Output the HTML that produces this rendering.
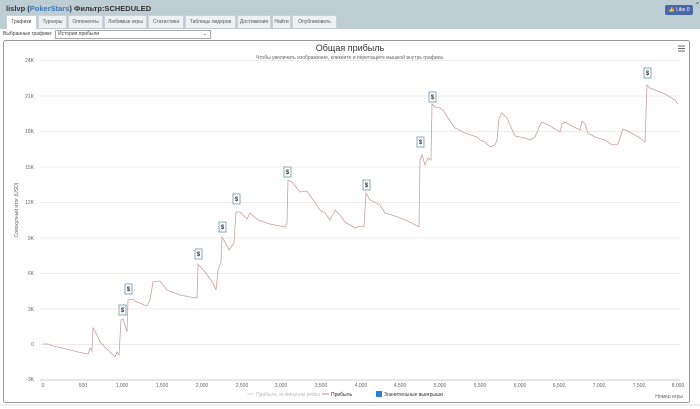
<!DOCTYPE html>
<html><head><meta charset="utf-8"><style>
body{margin:0;width:700px;height:409px;overflow:hidden;background:#fff;font-family:"Liberation Sans","DejaVu Sans",sans-serif;position:relative}
.hdr{position:absolute;left:0;top:0;width:700px;height:29px;background:#bdcdd4}
.title{position:absolute;left:6px;top:4px;font-size:7.5px;font-weight:bold;color:#333}
.title span{color:#3a78b8}
.tab{position:absolute;top:15px;height:13px;background:#eef1f2;border:1px solid #c9d2d6;border-bottom:none;font-size:5px;color:#555;line-height:13px;text-align:center;box-sizing:border-box}
.tab.on{background:#fff;height:14px;color:#444}
.fb{position:absolute;left:665px;top:5px;width:28px;height:10px;background:#4a67a8;border-radius:2px;color:#fff;font-size:5px;line-height:10px;text-align:center}
</style></head><body>
<div class="hdr"></div>
<div class="title">lislvp (<span>PokerStars</span>) Фильтр:SCHEDULED</div>
<div class="fb">👍 Like 0</div>
<div style="position:absolute;left:696px;top:1px;font-size:5px;color:#333">×</div>
<div class="tab on" style="left:6px;width:31px">Графики</div>
<div class="tab" style="left:38px;width:29px">Турниры</div>
<div class="tab" style="left:68px;width:35px">Оппоненты</div>
<div class="tab" style="left:104px;width:43px">Любимые игры</div>
<div class="tab" style="left:148px;width:36px">Статистика</div>
<div class="tab" style="left:185px;width:51px">Таблицы лидеров</div>
<div class="tab" style="left:237px;width:34px">Достижения</div>
<div class="tab" style="left:272px;width:19px">Найти</div>
<div class="tab" style="left:292px;width:45px">Опубликовать</div>
<div style="position:absolute;left:3px;top:31px;font-size:5px;color:#444">Выбранные графики:</div>
<div style="position:absolute;left:55px;top:30px;width:152px;height:7px;border:1px solid #aaa;font-size:5px;line-height:7px;color:#444;padding-left:2px;box-sizing:content-box">История прибыли<span style="position:absolute;right:3px">⌄</span></div>
<svg width="700" height="409" style="position:absolute;left:0;top:0" font-family="Liberation Sans,DejaVu Sans,sans-serif">
<rect x="3.5" y="40.5" width="686" height="362" fill="none" stroke="#999" rx="2"/>
<text x="350" y="51" font-size="9" text-anchor="middle" fill="#333">Общая прибыль</text>
<text x="350" y="59" font-size="5" text-anchor="middle" fill="#666">Чтобы увеличить изображение, кликните и перетащите мышкой внутрь графика.</text>
<g stroke="#666" stroke-width="1"><line x1="678" y1="46" x2="685" y2="46"/><line x1="678" y1="48.5" x2="685" y2="48.5"/><line x1="678" y1="51" x2="685" y2="51"/></g>
<g stroke="#ececec" stroke-width="1">
<line x1="40" x2="680" y1="60.5" y2="60.5"/><line x1="40" x2="680" y1="96" y2="96"/><line x1="40" x2="680" y1="131.5" y2="131.5"/><line x1="40" x2="680" y1="167" y2="167"/><line x1="40" x2="680" y1="202.5" y2="202.5"/><line x1="40" x2="680" y1="238" y2="238"/><line x1="40" x2="680" y1="273.5" y2="273.5"/><line x1="40" x2="680" y1="309" y2="309"/><line x1="40" x2="680" y1="344.5" y2="344.5"/><line x1="40" x2="680" y1="380" y2="380" stroke="#ccc"/>
</g>
<g font-size="5" fill="#666" text-anchor="end">
<text x="34" y="62">24K</text><text x="34" y="98">21K</text><text x="34" y="133">18K</text><text x="34" y="169">15K</text><text x="34" y="204">12K</text><text x="34" y="240">9K</text><text x="34" y="275">6K</text><text x="34" y="311">3K</text><text x="34" y="346">0</text><text x="34" y="381">-3K</text>
</g>
<text transform="translate(18,210) rotate(-90)" font-size="5" fill="#666" text-anchor="middle">Совокупный итог (USD)</text>
<g font-size="5" fill="#666" text-anchor="middle">
<text x="43" y="387">0</text><text x="83" y="387">500</text><text x="122" y="387">1,000</text><text x="162" y="387">1,500</text><text x="202" y="387">2,000</text><text x="242" y="387">2,500</text><text x="281" y="387">3,000</text><text x="321" y="387">3,500</text><text x="361" y="387">4,000</text><text x="400" y="387">4,500</text><text x="440" y="387">5,000</text><text x="480" y="387">5,500</text><text x="520" y="387">6,000</text><text x="559" y="387">6,500</text><text x="599" y="387">7,000</text><text x="639" y="387">7,500</text><text x="678" y="387">8,000</text>
</g>
<text x="683" y="398" font-size="5" fill="#666" text-anchor="end">Номер игры</text>
<line x1="247" x2="254" y1="394" y2="394" stroke="#ddd"/><text x="256" y="396" font-size="5" fill="#bbb">Прибыль за минусом рейка</text>
<line x1="322" x2="329" y1="394" y2="394" stroke="#b88"/><text x="331" y="396" font-size="5" fill="#333">Прибыль</text>
<rect x="376" y="391" width="6" height="6" fill="#2f7ed8"/><text x="384" y="396" font-size="5" fill="#333">Значительные выигрыши</text>
<polyline fill="none" stroke="#c9a0a0" stroke-width="0.8" points="43,344 48,344 53,346 70,350 78,352 88,354 90,348 92,351 93,328 97,335 100,342 110,352 115,357 117,352 119,355 121,320 123,319 127,332 128,300 133,299 135,301 147,306 150,300 153,282 160,281 167,290 180,295 190,297 197,298 198,264 205,272 213,283 216,290 218,270 221,262 222,237 225,242 229,250 234,243 236,212 240,212 247,219 250,213 258,220 270,224 285,227 287,223 288,180 292,182 300,192 307,191 320,210 325,213 330,220 335,210 340,215 345,222 350,225 355,228 360,226 364,227 366,193 370,200 380,205 385,213 395,216 410,222 419,227 420,160 422,155 425,165 428,158 431,160 432,104 435,107 440,108 443,110 448,118 455,128 465,133 477,137 480,140 485,142 490,147 495,145 497,140 499,118 502,113 507,118 510,125 515,136 520,137 525,138 530,140 535,137 540,125 542,122 550,126 560,132 562,124 565,122 570,125 580,130 582,121 585,124 588,133 595,137 605,140 612,145 618,144 623,129 628,131 640,138 645,142 647,85 650,88 660,92 665,94 670,97 675,100 678,104"/>
<g font-size="6" font-weight="bold" fill="#333" text-anchor="middle">
<g><rect x="119" y="305" width="7" height="10" fill="#fff" stroke="#8ab"/><text x="122.5" y="312">$</text></g>
<g><rect x="125" y="284" width="7" height="10" fill="#fff" stroke="#8ab"/><text x="128.5" y="291">$</text></g>
<g><rect x="195" y="249" width="7" height="10" fill="#fff" stroke="#8ab"/><text x="198.5" y="256">$</text></g>
<g><rect x="219" y="222" width="7" height="10" fill="#fff" stroke="#8ab"/><text x="222.5" y="229">$</text></g>
<g><rect x="233" y="194" width="7" height="10" fill="#fff" stroke="#8ab"/><text x="236.5" y="201">$</text></g>
<g><rect x="284" y="167" width="7" height="10" fill="#fff" stroke="#8ab"/><text x="287.5" y="174">$</text></g>
<g><rect x="363" y="180" width="7" height="10" fill="#fff" stroke="#8ab"/><text x="366.5" y="187">$</text></g>
<g><rect x="417" y="137" width="7" height="10" fill="#fff" stroke="#8ab"/><text x="420.5" y="144">$</text></g>
<g><rect x="429" y="92" width="7" height="10" fill="#fff" stroke="#8ab"/><text x="432.5" y="99">$</text></g>
<g><rect x="644" y="68" width="7" height="10" fill="#fff" stroke="#8ab"/><text x="647.5" y="75">$</text></g>
</g>
<line x1="0" x2="700" y1="405" y2="405" stroke="#ddd"/>
</svg>
</body></html>
